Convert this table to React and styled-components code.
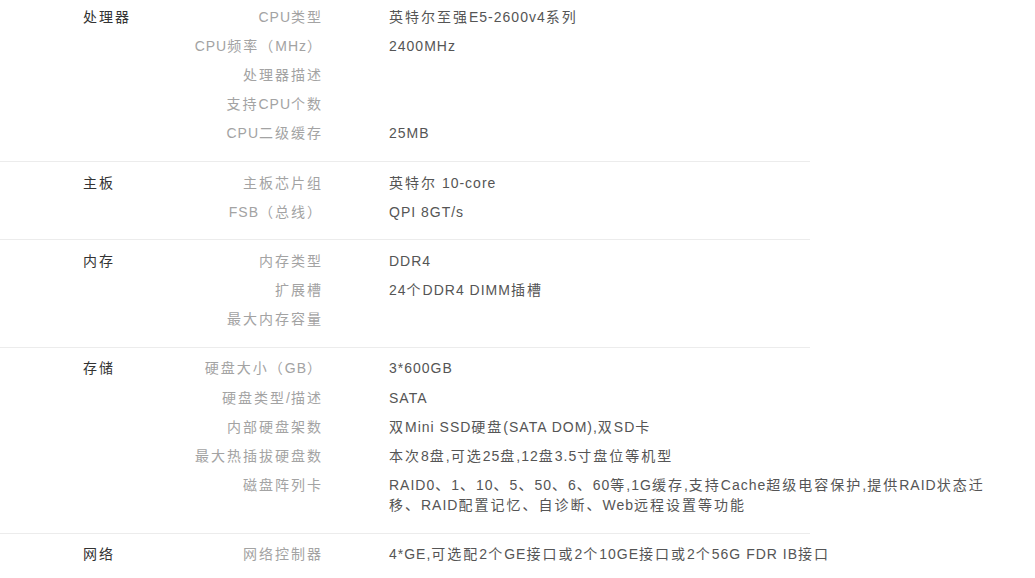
import React from 'react';
import styled, { createGlobalStyle } from 'styled-components';

const GlobalStyle = createGlobalStyle`
  body {
    margin: 0;
    background: #fff;
    font-family: "Liberation Sans", Arial, "Noto Sans CJK SC", sans-serif;
    font-size: 14px;
  }
`;

const specs = [
  {
    name: '处理器',
    items: [
      ['CPU类型', '英特尔至强E5-2600v4系列'],
      ['CPU频率（MHz）', '2400MHz'],
      ['处理器描述', ''],
      ['支持CPU个数', ''],
      ['CPU二级缓存', '25MB'],
    ],
  },
  {
    name: '主板',
    items: [
      ['主板芯片组', '英特尔 10-core'],
      ['FSB（总线）', 'QPI 8GT/s'],
    ],
  },
  {
    name: '内存',
    items: [
      ['内存类型', 'DDR4'],
      ['扩展槽', '24个DDR4 DIMM插槽'],
      ['最大内存容量', ''],
    ],
  },
  {
    name: '存储',
    items: [
      ['硬盘大小（GB）', '3*600GB'],
      ['硬盘类型/描述', 'SATA'],
      ['内部硬盘架数', '双Mini SSD硬盘(SATA DOM),双SD卡'],
      ['最大热插拔硬盘数', '本次8盘,可选25盘,12盘3.5寸盘位等机型'],
      ['磁盘阵列卡', 'RAID0、1、10、5、50、6、60等,1G缓存,支持Cache超级电容保护,提供RAID状态迁移、RAID配置记忆、自诊断、Web远程设置等功能'],
    ],
  },
  {
    name: '网络',
    items: [
      ['网络控制器', '4*GE,可选配2个GE接口或2个10GE接口或2个56G FDR IB接口'],
    ],
  },
];

const Page = styled.div`
  width: 1035px;
  height: 578px;
  overflow: hidden;
`;

const Section = styled.div`
  display: flex;
  width: 810px;
  padding: ${p => (p.$first ? '2px' : '6px')} 0 13px 83px;
  box-sizing: border-box;
  border-bottom: ${p => (p.$last ? 'none' : '1px solid #ececec')};
`;

const Category = styled.div`
  flex: 0 0 100px;
  padding-top: 4.6px;
  line-height: 20px;
  color: #333;
  letter-spacing: 2px;
`;

const List = styled.div`
  display: flex;
  flex-direction: column;
`;

const Row = styled.div`
  display: flex;
  padding: 4.6px 0;
  line-height: 20px;
  letter-spacing: 1px;
`;

const Label = styled.div`
  flex: 0 0 140px;
  text-align: right;
  color: #a3a3a3;
  white-space: nowrap;
`;

const Value = styled.div`
  flex: 0 0 606px;
  margin-left: 66px;
  color: #555;
  min-height: 20px;
`;

// Chinese runs are set a little wider than the Latin ones
const Cjk = styled.span`
  letter-spacing: 2px;
`;

const Mixed = ({ text }) =>
  text
    .split(/([\u3000-\u303f\u4e00-\u9fff\uff00-\uffef]+)/)
    .map((part, i) => (i % 2 ? <Cjk key={i}>{part}</Cjk> : part));

export default function App() {
  return (
    <Page>
      <GlobalStyle />
      {specs.map((s, i) => (
        <Section key={s.name} $first={i === 0} $last={i === specs.length - 1}>
          <Category>{s.name}</Category>
          <List>
            {s.items.map(([k, v]) => (
              <Row key={k}>
                <Label><Mixed text={k} /></Label>
                <Value><Mixed text={v} /></Value>
              </Row>
            ))}
          </List>
        </Section>
      ))}
    </Page>
  );
}
